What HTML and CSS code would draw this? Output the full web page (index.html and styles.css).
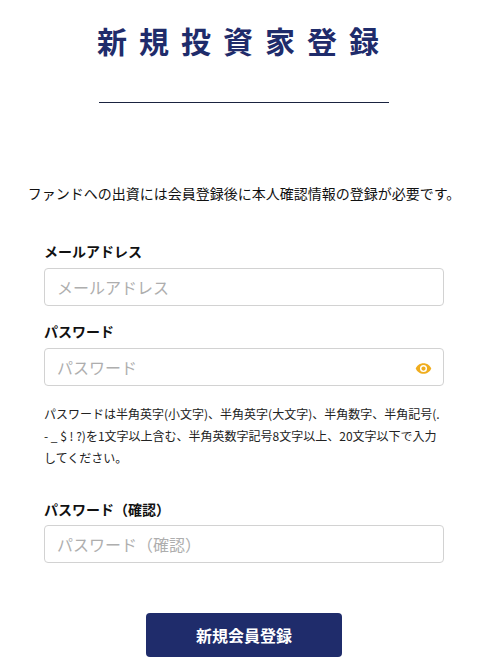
FILE: index.html
```html
<!DOCTYPE html>
<html lang="ja">
<head>
    <meta charset="UTF-8">
    <meta name="viewport" content="width=device-width, initial-scale=1.0">
    <title>新規投資家登録</title>
    <link rel="stylesheet" href="styles.css">
</head>
<body>
    <div class="container">
        <h1 class="title">新規投資家登録</h1>
        <div class="title-line"></div>
        <p class="lead">ファンドへの出資には会員登録後に本人確認情報の登録が必要です。</p>

        <form class="form">
            <label class="label" for="email">メールアドレス</label>
            <input class="field" type="text" id="email" placeholder="メールアドレス">

            <label class="label label-password" for="password">パスワード</label>
            <div class="field-wrap">
                <input class="field" type="password" id="password" placeholder="パスワード">
                <svg class="eye" viewBox="0 0 24 24" width="17" height="17" aria-hidden="true">
                    <path fill="#f0ad1e" d="M12 4.500C7 4.500 2.700 7.600 1 12c1.700 4.400 6 7.500 11 7.500s9.300-3.100 11-7.500c-1.700-4.400-6-7.500-11-7.500zM12 17a5 5 0 1 1 0-10 5 5 0 0 1 0 10zm0-8a3 3 0 1 0 0 6 3 3 0 0 0 0-6z"/>
                </svg>
            </div>
            <p class="note">パスワードは半角英字(小文字)、半角英字(大文字)、半角数字、半角記号(. - _ $ ! ?)を1文字以上含む、半角英数字記号8文字以上、20文字以下で入力してください。</p>

            <label class="label label-confirm" for="confirm">パスワード（確認）</label>
            <input class="field" type="password" id="confirm" placeholder="パスワード（確認）">

            <div class="actions">
                <button class="submit" type="button">新規会員登録</button>
            </div>
        </form>
    </div>
</body>
</html>
```
FILE: styles.css
```css
html, body {
    margin: 0;
    padding: 0;
    background: #fff;
}
body {
    font-family: "Noto Sans CJK JP", "Noto Sans", sans-serif;
    color: #111;
    height: 666px;
    overflow: hidden;
}
.container {
    width: 488px;
}
.title {
    margin: 0;
    padding-top: 18px;
    font-size: 30px;
    line-height: 44px;
    font-weight: 700;
    letter-spacing: 12px;
    text-align: center;
    color: #1f2c6b;
}
.title-line {
    width: 290px;
    height: 1px;
    margin: 40px auto 0;
    background: #1a2340;
}
.lead {
    margin: 71px 0 0;
    font-size: 14px;
    line-height: 38px;
    text-align: center;
    white-space: nowrap;
}
.form {
    margin: 27px 44px 0;
}
.label {
    display: block;
    font-size: 14px;
    line-height: 24px;
    font-weight: 700;
    margin-bottom: 5px;
}
.label-password {
    margin-top: 13px;
}
.label-confirm {
    margin-top: 28px;
    margin-bottom: 4px;
}
.field {
    display: block;
    box-sizing: border-box;
    width: 400px;
    height: 38px;
    padding: 0 12px;
    border: 1px solid #d2d2d2;
    border-radius: 4px;
    background: #fff;
    font-family: inherit;
    font-size: 16px;
}
.field::placeholder {
    color: #aeaeae;
    opacity: 1;
}
.field-wrap {
    position: relative;
}
.eye {
    position: absolute;
    right: 12px;
    top: 12px;
}
.note {
    margin: 17px 0 0;
    font-size: 12px;
    line-height: 22px;
    color: #222;
}
.actions {
    margin-top: 50px;
    display: flex;
    justify-content: center;
}
.submit {
    width: 196px;
    height: 44px;
    border: 0;
    border-radius: 4px;
    background: #1f2c6b;
    color: #fff;
    font-family: inherit;
    font-size: 16px;
    font-weight: 700;
}
```
